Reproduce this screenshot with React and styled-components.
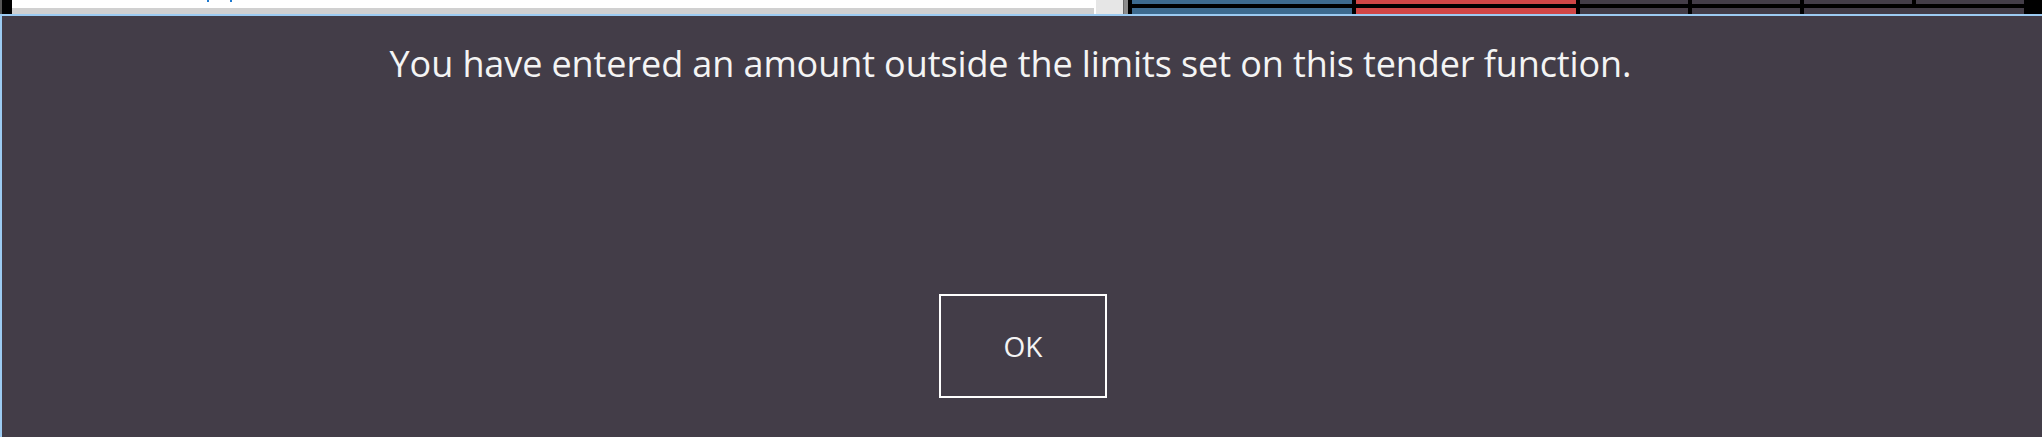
import React from 'react';
import styled, { createGlobalStyle } from 'styled-components';

const GlobalStyle = createGlobalStyle`
  html, body {
    margin: 0;
    padding: 0;
    height: 100%;
    overflow: hidden;
    background: #433d48;
  }
  #root {
    height: 100%;
  }
`;

const colors = {
  dialog: '#433d48',
  accent: '#9ccbf2',
  blue: '#3d6a8e',
  red: '#cf4646',
  text: '#f4f4f4',
};

export default function App() {
  return (
    <>
      <GlobalStyle />
      <Page>
        <Backdrop>
          <EdgeStrip />
          <BlackStrip />
          <ListPanel>
            <ListBody>
              <Tick $left={195} />
              <Tick $left={21} />
            </ListBody>
            <HScroll />
          </ListPanel>
          <VScroll />
          <ButtonGrid>
            <Key $color={colors.blue} />
            <Key $color={colors.red} />
            <Key />
            <Key />
            <Key />
            <Key />
            <Key $color={colors.blue} />
            <Key $color={colors.red} />
            <Key />
            <Key />
            <Key $span={2} />
          </ButtonGrid>
          <BlackTail />
        </Backdrop>

        <Dialog>
          <Message>
            You have entered an amount outside the limits set on this tender function.
          </Message>
          <OkButton>OK</OkButton>
        </Dialog>
      </Page>
    </>
  );
}

const Page = styled.div`
  height: 437px;
  display: flex;
  flex-direction: column;
  overflow: hidden;
`;

const Backdrop = styled.div`
  height: 14px;
  display: flex;
  flex-shrink: 0;
  background: #000;
`;

const EdgeStrip = styled.div`
  width: 2px;
  background: #565656;
`;

const BlackStrip = styled.div`
  width: 10px;
  background: #000;
`;

const ListPanel = styled.div`
  width: 1082px;
  display: flex;
  flex-direction: column;
  border-right: 2px solid #ffffff;
`;

const ListBody = styled.div`
  height: 8px;
  background: #ffffff;
  display: flex;
  align-items: flex-start;
`;

const Tick = styled.span`
  width: 2px;
  height: 2px;
  margin-left: ${(p) => p.$left}px;
  background: #1f7ad0;
`;

const HScroll = styled.div`
  flex: 1;
  background: #d0d0d0;
`;

const VScroll = styled.div`
  width: 28px;
  background: #e6e6e6;
  border-right: 4px solid #8c8c8c;
  box-shadow: inset -1px 0 0 #6a6a6a;
`;

const ButtonGrid = styled.div`
  display: grid;
  grid-template-columns: 220px 220px 108px 108px 108px 108px;
  grid-template-rows: 4px 6px;
  gap: 4px;
  padding-left: 4px;
  background: #000;
`;

const Key = styled.div`
  background: ${(p) => p.$color || colors.dialog};
  grid-column: span ${(p) => p.$span || 1};
`;

const BlackTail = styled.div`
  flex: 1;
  background: #000;
`;

const Dialog = styled.div`
  flex: 1;
  display: flex;
  flex-direction: column;
  align-items: center;
  background: ${colors.dialog};
  border-top: 2px solid ${colors.accent};
  border-left: 2px solid ${colors.accent};
  padding-bottom: 39px;
`;

const Message = styled.p`
  margin: 24px 0 0 -23px;
  font-family: 'Open Sans', 'Noto Sans', sans-serif;
  font-size: 36px;
  line-height: 48px;
  letter-spacing: -0.1px;
  color: ${colors.text};
  white-space: nowrap;
`;

const OkButton = styled.button`
  margin-top: auto;
  margin-left: 2px;
  width: 168px;
  height: 104px;
  background: transparent;
  border: 2px solid #ffffff;
  color: ${colors.text};
  font-family: 'Open Sans', 'Noto Sans', sans-serif;
  font-size: 28px;
  padding: 0;
`;
